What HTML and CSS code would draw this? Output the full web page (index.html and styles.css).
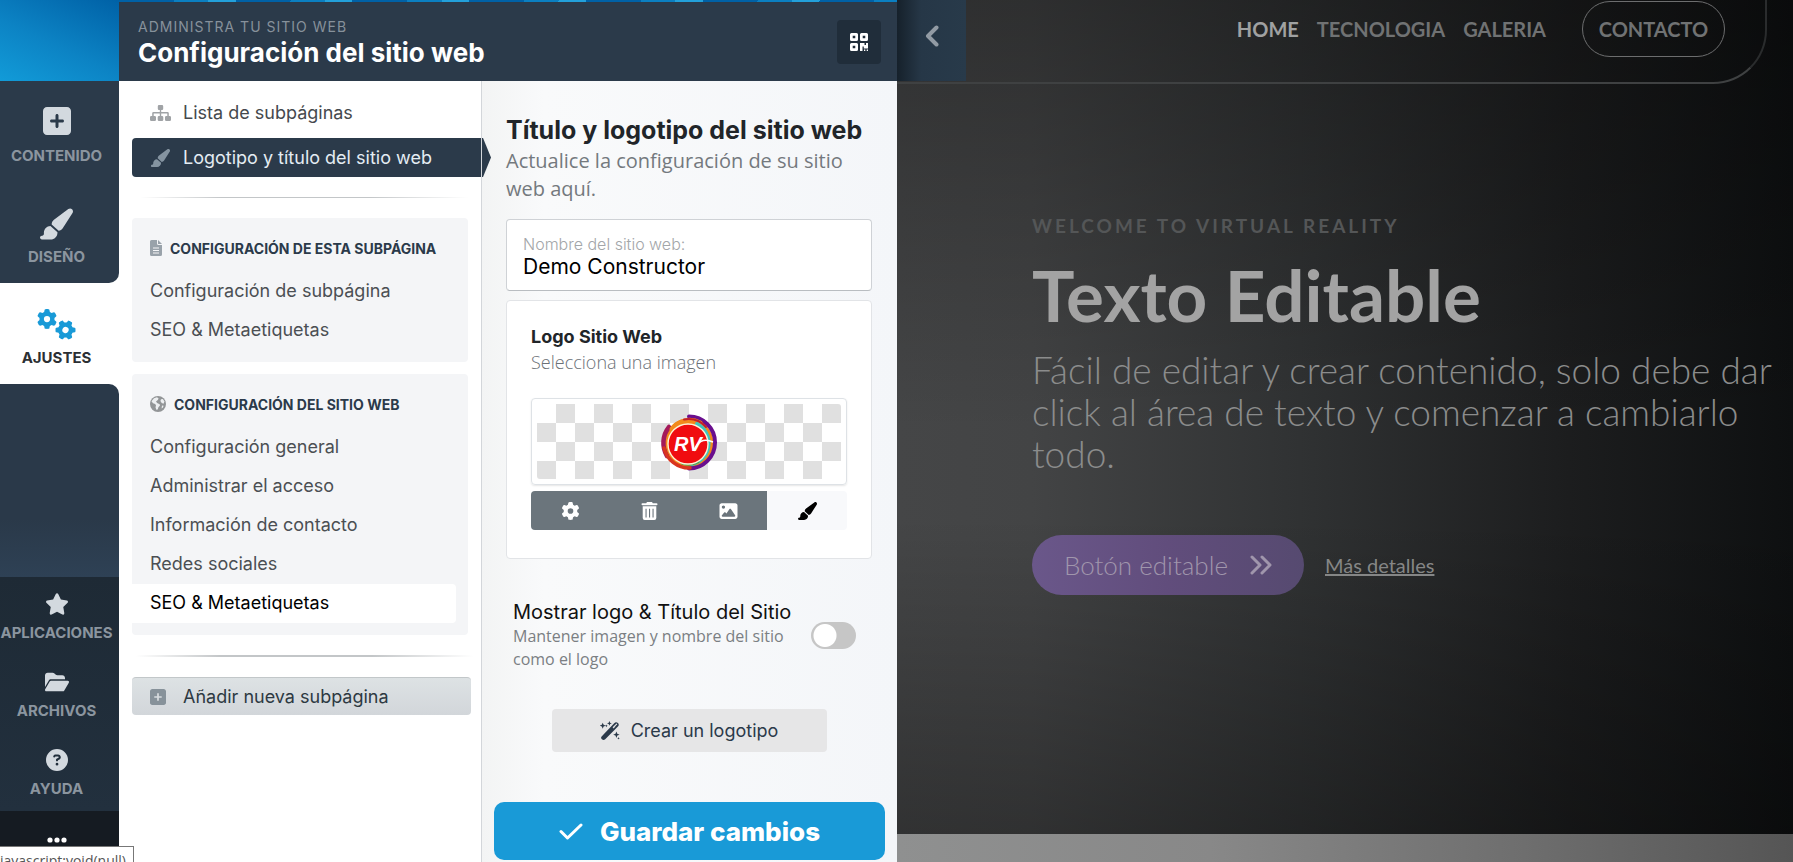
FILE: index.html
```html
<!DOCTYPE html>
<html lang="es">
<head>
<meta charset="utf-8">
<meta name="viewport" content="width=device-width, initial-scale=1">
<title>Configuración del sitio web</title>
<link rel="stylesheet" href="styles.css">
</head>
<body>
<svg class="sprite" aria-hidden="true">
  <symbol id="i-plus" viewBox="0 32 448 448"><path d="M64 32C28.700 32 0 60.700 0 96V416c0 35.300 28.700 64 64 64H384c35.300 0 64-28.700 64-64V96c0-35.300-28.700-64-64-64H64zM200 344V280H136c-13.300 0-24-10.700-24-24s10.700-24 24-24h64V168c0-13.300 10.700-24 24-24s24 10.700 24 24v64h64c13.300 0 24 10.700 24 24s-10.700 24-24 24H248v64c0 13.300-10.700 24-24 24s-24-10.700-24-24z"/></symbol>
  <symbol id="i-brush" viewBox="32 0 544 512"><path d="M339.3 367.1c27.3-3.9 51.9-19.4 67.2-42.9L568.2 74.1c12.6-19.5 9.4-45.3-7.6-61.2S517.7-4.4 499.1 9.6L262.4 187.2c-24 18-38.2 46.1-38.4 76.1L339.3 367.1zm-19.6 25.4l-116-104.4C143.9 290.3 96 339.6 96 400c0 3.9 .2 7.8 .6 11.6C98.4 429.1 86.4 448 68.800 448H64c-17.7 0-32 14.3-32 32s14.3 32 32 32H208c61.900 0 112-50.100 112-112c0-2.500-.1-5-.2-7.500z"/></symbol>
  <symbol id="i-gear" viewBox="0 0 512 512"><path d="M495.9 166.6c3.2 8.7 .5 18.4-6.4 24.6l-43.3 39.4c1.1 8.3 1.7 16.8 1.7 25.4s-.6 17.1-1.7 25.4l43.3 39.4c6.9 6.2 9.6 15.9 6.4 24.6c-4.4 11.9-9.7 23.3-15.8 34.3l-4.7 8.1c-6.6 11-14 21.4-22.1 31.2c-5.9 7.2-15.7 9.6-24.5 6.8l-55.7-17.7c-13.4 10.3-28.2 18.9-44 25.4l-12.5 57.1c-2 9.1-9 16.3-18.2 17.8c-13.8 2.3-28 3.5-42.5 3.5s-28.7-1.2-42.5-3.5c-9.2-1.5-16.2-8.7-18.2-17.8l-12.5-57.1c-15.8-6.5-30.6-15.1-44-25.4L83.1 425.9c-8.8 2.8-18.6 .3-24.5-6.8c-8.1-9.8-15.5-20.2-22.1-31.2l-4.7-8.1c-6.1-11-11.4-22.4-15.8-34.3c-3.2-8.7-.5-18.4 6.4-24.6l43.3-39.4C64.6 273.1 64 264.6 64 256s.6-17.1 1.7-25.4L22.4 191.2c-6.9-6.2-9.6-15.9-6.4-24.6c4.4-11.9 9.7-23.3 15.8-34.3l4.7-8.1c6.6-11 14-21.4 22.1-31.2c5.9-7.2 15.7-9.6 24.5-6.8l55.7 17.7c13.4-10.3 28.2-18.9 44-25.4l12.5-57.1c2-9.1 9-16.3 18.2-17.8C227.3 1.2 241.5 0 256 0s28.7 1.2 42.5 3.5c9.2 1.5 16.2 8.7 18.2 17.8l12.5 57.1c15.8 6.5 30.6 15.1 44 25.4l55.7-17.7c8.8-2.8 18.6-.3 24.5 6.8c8.1 9.8 15.5 20.2 22.1 31.2l4.7 8.1c6.1 11 11.4 22.4 15.8 34.3zM256 336a80 80 0 1 0 0-160 80 80 0 1 0 0 160z"/></symbol>
</svg>

<div class="app">
  <nav class="rail" aria-label="Principal">
    <div class="rail-brand"></div>
    <div class="rail-group rail-top">
      <a class="rail-item" href="#"><svg class="ri-28"><use href="#i-plus"/></svg><span>CONTENIDO</span></a>
      <a class="rail-item" href="#"><svg class="ri-33"><use href="#i-brush"/></svg><span>DISEÑO</span></a>
    </div>
    <a class="rail-item rail-active" href="#"><svg class="ri-gears" viewBox="0 0 39 31"><use href="#i-gear" x="0" y="0" width="20" height="20"/><g transform="rotate(30 28.500 21)"><use href="#i-gear" x="18.500" y="11" width="20" height="20"/></g></svg><span>AJUSTES</span></a>
    <div class="rail-fill"></div>
    <div class="rail-group rail-low">
      <a class="rail-item" href="#"><svg class="ri-23" viewBox="0 0 576 512"><path d="M316.9 18C311.600 7 300.400 0 288.100 0s-23.400 7-28.800 18L195 150.300 51.400 171.500c-12 1.800-22 10.200-25.700 21.700s-.7 24.200 7.900 32.700L137.800 329 113.200 474.700c-2 12 3 24.200 12.900 31.300s23 8 33.800 2.300l128.300-68.500 128.300 68.500c10.800 5.700 23.900 4.900 33.800-2.300s14.900-19.300 12.900-31.300L438.500 329 542.700 225.900c8.600-8.500 11.700-21.200 7.900-32.700s-13.700-19.900-25.700-21.700L381.200 150.300 316.900 18z"/></svg><span>APLICACIONES</span></a>
      <a class="rail-item" href="#"><svg class="ri-23" viewBox="0 0 576 512"><path d="M88.7 223.800L0 375.800V96C0 60.700 28.700 32 64 32H181.500c17 0 33.300 6.700 45.300 18.700l26.500 26.500c12 12 28.300 18.700 45.300 18.700H416c35.300 0 64 28.700 64 64v32H144c-22.800 0-43.800 12.100-55.300 31.800zm27.600 16.100C122.100 230 132.600 224 144 224H544c11.500 0 22 6.100 27.700 16.100s5.700 22.200-.1 32.100l-112 192C453.900 474 443.400 480 432 480H32c-11.500 0-22-6.100-27.700-16.100s-5.700-22.200 .1-32.100l112-192z"/></svg><span>ARCHIVOS</span></a>
      <a class="rail-item" href="#"><svg class="ri-23" viewBox="0 0 512 512"><path d="M256 512A256 256 0 1 0 256 0a256 256 0 1 0 0 512zM169.800 165.300c7.900-22.300 29.100-37.300 52.800-37.300h58.300c34.900 0 63.100 28.300 63.100 63.100c0 22.600-12.100 43.500-31.700 54.800L280 264.400c-.2 13-10.900 23.600-24 23.600c-13.300 0-24-10.700-24-24V250.500c0-8.600 4.600-16.500 12.100-20.800l44.300-25.400c4.700-2.700 7.600-7.700 7.600-13.100c0-8.400-6.800-15.100-15.100-15.100H222.600c-3.400 0-6.400 2.100-7.500 5.300l-.4 1.200c-4.400 12.500-18.200 19-30.600 14.600s-19-18.200-14.600-30.600l.4-1.200zM224 352a32 32 0 1 1 64 0 32 32 0 1 1 -64 0z"/></svg><span>AYUDA</span></a>
    </div>
    <button class="rail-more" type="button" aria-label="Más opciones"><svg viewBox="0 0 20 6"><circle cx="3" cy="3" r="2.600"/><circle cx="10" cy="3" r="2.600"/><circle cx="17" cy="3" r="2.600"/></svg></button>
  </nav>

  <div class="admin">
    <header class="admin-head">
      <div>
        <p class="eyebrow">ADMINISTRA TU SITIO WEB</p>
        <h1>Configuración del sitio web</h1>
      </div>
      <button class="qr" type="button" aria-label="Código QR"><svg viewBox="0 0 18 18"><path fill-rule="evenodd" d="M1.500 0h5A1.500 1.500 0 0 1 8 1.500v5A1.500 1.500 0 0 1 6.500 8h-5A1.500 1.500 0 0 1 0 6.500v-5A1.500 1.500 0 0 1 1.500 0zm1.200 2.700v2.600h2.600V2.700zM11.500 0h5A1.500 1.500 0 0 1 18 1.500v5A1.500 1.500 0 0 1 16.500 8h-5A1.500 1.500 0 0 1 10 6.500v-5A1.500 1.500 0 0 1 11.500 0zm1.200 2.700v2.600h2.600V2.700zM1.500 10h5A1.500 1.500 0 0 1 8 11.500v5A1.500 1.500 0 0 1 6.500 18h-5A1.500 1.500 0 0 1 0 16.500v-5A1.500 1.500 0 0 1 1.500 10zm1.200 2.700v2.600h2.600v-2.600zM10 10h4.500v2h1.500v-2h2v5.500h-4.200v-2h-1.300V18H10zM14 16.500h1.300V18H14zM16.700 16.500H18V18h-1.300z"/></svg></button>
    </header>

    <div class="admin-body">
      <nav class="menu" aria-label="Ajustes">
        <a class="menu-link" href="#"><svg class="mi" viewBox="0 0 21 16"><path d="M7.800 1.200Q7.800 0 9 0h3q1.200 0 1.200 1.200v2.600Q13.200 5 12 5h-.8v1.900h6.300q1.300 0 1.300 1.300V11h.9q1.300 0 1.300 1.300v2.400q0 1.300-1.300 1.300h-3.400Q15 16 15 14.700v-2.400Q15 11 16.300 11h1V8.400h-6.100V11h.8q1.300 0 1.300 1.300v2.400q0 1.300-1.300 1.300H9q-1.300 0-1.300-1.300v-2.400Q7.700 11 9 11h.8V8.400H3.700V11h1Q6 11 6 12.300v2.400Q6 16 4.700 16H1.300Q0 16 0 14.700v-2.400Q0 11 1.300 11h.9V8.200q0-1.300 1.300-1.300h6.300V5H9Q7.800 5 7.800 3.800z"/></svg>Lista de subpáginas</a>
        <a class="menu-link menu-current" href="#"><svg class="mi"><use href="#i-brush"/></svg>Logotipo y título del sitio web</a>
        <hr class="rule">
        <section class="group">
          <h2><svg class="gi-file" viewBox="0 0 12 16"><path fill-rule="evenodd" d="M1.500 0H7v3.500Q7 5 8.500 5H12v9.500q0 1.500-1.500 1.500h-9Q0 16 0 14.500v-13Q0 0 1.500 0zM8 0l4 4H8zM3 7.600v1h6v-1zM3 10v1h6v-1zM3 12.400v1h6v-1z"/></svg>CONFIGURACIÓN DE ESTA SUBPÁGINA</h2>
          <a href="#">Configuración de subpágina</a>
          <a href="#">SEO &amp; Metaetiquetas</a>
        </section>
        <section class="group">
          <h2><svg class="gi-globe" viewBox="0 0 16 16"><circle cx="8" cy="8" r="8"/><path class="land" d="M1.500 5.200L3 7.200l2.200.8.8 1.600-.5 1.600.8 2.600 1.400-.4.700-2.200 1.600-1.600-.3-1.400-2.600-1.200L6 5.600 7.800 4l.8-1.600L7 1.300 4 2.200zM11 3.200l1.800-.3 1.700 2.500-1 2.300-1.800-.6-1.300-2zM12 9.600l1.600.2-.6 1.800-1.400.8z"/></svg>CONFIGURACIÓN DEL SITIO WEB</h2>
          <a href="#">Configuración general</a>
          <a href="#">Administrar el acceso</a>
          <a href="#">Información de contacto</a>
          <a href="#">Redes sociales</a>
          <a class="group-hover" href="#">SEO &amp; Metaetiquetas</a>
        </section>
        <hr class="rule rule-strong">
        <button class="add" type="button"><svg class="ai"><use href="#i-plus"/></svg>Añadir nueva subpágina</button>
      </nav>

      <main class="settings">
        <h2 class="settings-title">Título y logotipo del sitio web</h2>
        <p class="settings-lead">Actualice la configuración de su sitio web aquí.</p>
        <div class="field">
          <label for="site-name">Nombre del sitio web:</label>
          <input id="site-name" type="text" value="Demo Constructor">
        </div>
        <section class="card">
          <h3>Logo Sitio Web</h3>
          <p>Selecciona una imagen</p>
          <div class="thumb"><div class="checker">
            <svg class="logo" viewBox="0 0 58 58" role="img" aria-label="RV">
              <circle cx="29" cy="30" r="24.500" fill="#f28a1c"/>
              <g fill="none" stroke-linecap="round">
                <path d="M29 3.500A26 26 0 0 1 29 55.500" stroke="#6a0f8e" stroke-width="4"/>
                <path d="M9 14A25.500 25.500 0 0 0 7 43" stroke="#a3195b" stroke-width="4.500"/>
                <path d="M4 35A26 26 0 0 0 30 55" stroke="#d9341f" stroke-width="3.500"/>
                <path d="M12 16A22 22 0 0 1 40 10" stroke="#f28a1c" stroke-width="5"/>
                <path d="M24 6.500A24 24 0 0 1 46 14" stroke="#c2212c" stroke-width="2"/>
                <path d="M37 11A21.500 21.500 0 0 1 32 51" stroke="#3cc5c0" stroke-width="4"/>
                <path d="M22 50A21 21 0 0 0 38 49" stroke="#4f9f52" stroke-width="3"/>
              </g>
              <circle cx="28" cy="31" r="20" fill="#f00c10" stroke="#fff3d6" stroke-width="1.400"/>
              <text class="logo-mark" x="14" y="38">RV</text>
              <path d="M34 38Q39 23 53 29" fill="none" stroke="#fff" stroke-width="1.500"/>
            </svg>
          </div></div>
          <div class="tools">
            <button type="button" aria-label="Ajustes"><svg><use href="#i-gear"/></svg></button>
            <button type="button" aria-label="Eliminar"><svg viewBox="0 0 16 18"><path fill-rule="evenodd" d="M5.500 0h5l.8 1.200H15q1 0 1 1T15 3.300H1q-1 0-1-1.100t1-1h3.700zM1.200 4.300h13.600V16q0 2-2 2H3.200q-2 0-2-2zM4 6.700v8.800h1.100V6.700zM7.500 6.700v8.800h1.100V6.700zM11 6.700v8.800h1.100V6.700z"/></svg></button>
            <button type="button" aria-label="Imagen"><svg viewBox="0 0 512 512"><path d="M0 96C0 60.700 28.700 32 64 32H448c35.300 0 64 28.700 64 64V416c0 35.300-28.700 64-64 64H64c-35.300 0-64-28.700-64-64V96zM323.800 202.500c-4.500-6.600-11.900-10.500-19.800-10.500s-15.400 3.900-19.800 10.500l-87 127.600L170.700 297c-4.600-5.700-11.500-9-18.700-9s-14.200 3.300-18.700 9l-64 80c-5.800 7.200-6.900 17.100-2.900 25.400s12.400 13.600 21.600 13.600h96 32H424c8.900 0 17.100-4.900 21.200-12.800s3.600-17.400-1.400-24.700l-120-176zM112 192a48 48 0 1 0 0-96 48 48 0 1 0 0 96z"/></svg></button>
            <button class="tool-on" type="button" aria-label="Diseño"><svg><use href="#i-brush"/></svg></button>
          </div>
        </section>
        <div class="switch-row">
          <label for="show-logo"><span class="switch-title">Mostrar logo &amp; Título del Sitio</span><span class="switch-hint">Mantener imagen y nombre del sitio como el logo</span></label>
          <input id="show-logo" class="switch" type="checkbox" role="switch">
        </div>
        <button class="create" type="button"><svg viewBox="0 0 20 19"><path d="M1.600 15.400L14.200 2.200Q16 .3 17.900 1.900q1.700 1.700 0 3.500L5.200 18.300Q3.500 19.600 1.900 18.200.4 16.900 1.600 15.400zM16 4.600l.9-.9q.5-.5.1-.9-.5-.4-1 .1L12.600 6.300l1.100 1.100z" fill-rule="evenodd"/><path d="M2.700 1.700l.9 2.100 2.100.9-2.100.9-.9 2.100-.9-2.100-2.100-.9 2.100-.9zM9.400 0l.7 1.700 1.700.7-1.700.7-.7 1.700-.7-1.700L7 2.400l1.700-.7zM6.300 3.500l.5.900.9.400-.9.500-.5.900-.4-.9-.9-.5.900-.4zM16.400 10.500l.9 2.300 2.300.9-2.300.9-.9 2.300-.9-2.300-2.300-.9 2.300-.9zM18.500 16l.4.900.9.400-.9.400-.4.900-.4-.9-.9-.4.900-.4z"/></svg>Crear un logotipo</button>
        <button class="save" type="submit"><svg viewBox="0 0 24 17"><path d="M2 8.500l6.500 6.500L22 2"/></svg>Guardar cambios</button>
      </main>
    </div>
  </div>

  <div class="preview">
    <button class="collapse" type="button" aria-label="Contraer"><svg viewBox="0 0 14 22"><path d="M11.500 2.500L3 11l8.500 8.500"/></svg></button>
    <header class="site-head">
      <nav>
        <a class="on" href="#">HOME</a>
        <a href="#">TECNOLOGIA</a>
        <a href="#">GALERIA</a>
        <a class="pill" href="#">CONTACTO</a>
      </nav>
    </header>
    <section class="hero">
      <p class="hero-eyebrow">WELCOME TO VIRTUAL REALITY</p>
      <h2>Texto Editable</h2>
      <p class="hero-text">Fácil de editar y crear contenido, solo debe dar click al área de texto y comenzar a cambiarlo todo.</p>
      <div class="hero-actions">
        <a class="hero-btn" href="#">Botón editable<svg viewBox="0 0 22 20"><path d="M2 2l8 8-8 8M12 2l8 8-8 8"/></svg></a>
        <a class="hero-more" href="#">Más detalles</a>
      </div>
    </section>
    <div class="next-strip"></div>
  </div>
</div>
<div class="status">javascript:void(null)</div>
</body>
</html>
```
FILE: styles.css
```css
* { box-sizing: border-box; }
body {
  margin: 0;
  font-family: Inter, "Liberation Sans", sans-serif;
  color: #212529;
  overflow: hidden;
}
h1, h2, h3, p { margin: 0; }
a { color: inherit; text-decoration: none; }
button { border: 0; padding: 0; font: inherit; color: inherit; }
svg { display: block; fill: currentColor; flex: none; }
.sprite { position: absolute; width: 0; height: 0; }

.app { display: flex; height: 100vh; }

/* Left rail */
.rail {
  flex: 0 0 119px;
  display: flex;
  flex-direction: column;
  background: #fff;
  font-weight: 700;
  font-size: 15px;
  line-height: 20px;
}
.rail-brand { height: 81px; flex: none; background: linear-gradient(25deg, #129bd8 0%, #0c83c4 45%, #0061a6 100%); }
.rail-group { background: #2b3a4a; }
.rail-top { border-bottom-right-radius: 10px; flex: none; }
.rail-item {
  display: flex;
  flex-direction: column;
  align-items: center;
  justify-content: space-between;
  height: 101px;
  padding: 26px 0 16px;
  margin-right: 6px;
  color: #d3d9df;
}
.rail-item span { color: #8b959f; }
.ri-28 { width: 28px; height: 28px; }
.ri-33 { width: 33px; height: 32px; }
.ri-23 { width: 24px; height: 22px; }
.ri-gears { width: 39px; height: 31px; }
.rail-active { flex: none; color: #199ad7; }
.rail-active span { color: #2b2f33; }
.rail-fill { flex: 1; background: linear-gradient(#2a3949 70%, #2e4155); border-top-right-radius: 10px; }
.rail-low { background: linear-gradient(#1e2a35, #22303e); flex: none; }
.rail-low .rail-item { height: 78px; padding: 16px 0 12px; white-space: nowrap; }
.rail-more { flex: 0 0 51px; background: #151b22; color: #fff; padding: 7px 6px 0 0; display: flex; justify-content: center; }
.rail-more svg { width: 20px; height: 6px; margin-top: 19px; }

/* Admin panel */
.admin { flex: 0 0 778px; display: flex; flex-direction: column; min-width: 0; }
.admin-head {
  flex: 0 0 81px;
  display: flex;
  justify-content: space-between;
  align-items: center;
  padding: 2px 16px 0 19px;
  color: #fff;
  background:
    repeating-linear-gradient(100deg, #0061a6 0 54px, #0b7fc1 54px 88px, #23a0da 88px 115px) top / 100% 2px no-repeat,
    #2b3a4a;
}
.eyebrow { font-size: 14px; line-height: 22px; letter-spacing: 1px; color: #87919b; }
h1 { font-size: 26px; line-height: 30px; font-weight: 700; }
.qr { width: 44px; height: 44px; border-radius: 4px; background: #202d3a; display: grid; place-items: center; }
.qr svg { width: 18px; height: 18px; }
.admin-body { flex: 1; display: flex; min-height: 0; }

/* Settings menu */
.menu { flex: 0 0 363px; padding: 12px 0 0 13px; border-right: 1px solid #d3d6da; background: #fff; font-size: 18px; }
.menu-link {
  position: relative;
  display: flex;
  align-items: center;
  gap: 12px;
  height: 39px;
  padding-left: 18px;
  margin-bottom: 6px;
  color: #45494d;
}
.mi { width: 21px; height: 18px; color: #a0a3a6; }
.menu-current { background: #2b3a4a; color: #e4ecf3; border-radius: 4px 0 0 4px; }
.menu-current .mi { color: #8594a1; }
.menu-current::after {
  content: "";
  position: absolute;
  left: 100%;
  top: 0;
  width: 9px;
  height: 39px;
  background: #2b3a4a;
  border-left: 1px solid #d3d6da;
  clip-path: polygon(0 0, 2px 0, 100% 50%, 2px 100%, 0 100%);
}
.rule { height: 1px; border: 0; margin: 20px 13px 20px 8px; background: linear-gradient(90deg, transparent, #c3c6c8 25%, #c3c6c8 70%, transparent); }
.rule-strong { height: 2px; margin: 20px 8px 20px 4px; }
.group { margin: 0 13px 12px 0; padding: 15px 0 12px; background: #f4f5f7; border-radius: 4px; color: #4b4f53; }
.group h2 {
  display: flex;
  align-items: center;
  gap: 8px;
  padding-left: 18px;
  height: 30px;
  margin-bottom: 9px;
  font-size: 14px;
  font-weight: 700;
  color: #2b3a4a;
  white-space: nowrap;
}
.gi-file { width: 12px; height: 16px; color: #99a2aa; }
.gi-globe { width: 16px; height: 16px; color: #929597; }
.land { fill: #eceef0; }
.group a { display: block; padding-left: 18px; height: 39px; line-height: 38px; }
.group .group-hover { margin-right: 12px; background: #fff; color: #000; border-radius: 0 4px 4px 0; }
.add {
  display: flex;
  align-items: center;
  gap: 17px;
  width: 339px;
  height: 38px;
  padding-left: 18px;
  border-radius: 4px;
  background: linear-gradient(#dde2e4, #d2d6da);
  border-top: 1px solid #c2c7c9;
  color: #2d3942;
}
.ai { width: 16px; height: 16px; color: #87929a; }

/* Settings form */
.settings {
  flex: 1;
  min-width: 0;
  display: flex;
  flex-direction: column;
  padding: 32px 12px 2px 12px;
  background: linear-gradient(90deg, #f3f4f4, #f9fafb 15%, #f4f6f9);
}
.settings > * { margin-left: 12px; margin-right: 13px; }
.settings-title { font-size: 25px; line-height: 34px; font-weight: 700; white-space: nowrap; }
.settings-lead { font-family: "Open Sans", sans-serif; font-size: 20px; line-height: 28px; color: #74797e; }
.field {
  margin-top: 16px;
  height: 72px;
  padding: 14px 16px 0;
  background: #fff;
  border: 1px solid #cfd2d6;
  border-bottom-color: #b9bdc1;
  border-radius: 4px;
  display: flex;
  flex-direction: column;
}
.field label { font-size: 16px; line-height: 21px; color: #a3a6a9; font-weight: 300; }
.field input { border: 0; outline: 0; padding: 0; font: inherit; font-size: 21px; line-height: 24px; height: 24px; color: #000; background: none; }
.card { margin-top: 9px; padding: 23px 24px 28px; background: #fff; border: 1px solid #e2e4e7; border-radius: 4px; }
.card h3 { font-size: 18px; line-height: 26px; font-weight: 700; }
.card p { font-family: "Open Sans", sans-serif; font-size: 18px; line-height: 24px; font-weight: 300; color: #6b7177; }
.thumb { margin-top: 24px; height: 87px; padding: 5px; border: 1px solid #dee2e6; border-radius: 4px; box-shadow: 0 1px 2px #0000001a; }
.checker {
  height: 75px;
  display: grid;
  place-items: center;
  border-radius: 3px;
  background: repeating-conic-gradient(#e0e0e0 0 25%, #fff 0 50%) 0 0 / 38px 38px;
}
.logo { width: 58px; height: 58px; }
.logo-mark { font: italic 700 20px "Liberation Sans", sans-serif; fill: #fff; }
.tools { display: grid; grid-template-columns: 79px 79px 78px 1fr; height: 39px; margin-top: 6px; border-radius: 4px; overflow: hidden; }
.tools button { background: #6b757c; color: #fff; display: grid; place-items: center; }
.tools .tool-on { background: #f8f9fb; color: #000; }
.tools svg { width: 19px; height: 18px; }
.switch-row { margin: 41px 29px 0 19px; display: flex; align-items: center; gap: 16px; }
.switch-row label { flex: 1; min-width: 0; }
.switch-title { display: block; font-size: 20px; line-height: 25px; color: #111; white-space: nowrap; }
.switch-hint { display: block; font-family: "Open Sans", sans-serif; font-size: 16px; line-height: 23px; color: #7b7f83; }
.switch { appearance: none; flex: none; margin: 0; width: 45px; height: 27px; border-radius: 14px; background: radial-gradient(circle at 14px 50%, #fff 11px, transparent 12px), #c6c6c6; }
.create {
  align-self: center;
  margin-top: 38px;
  width: 275px;
  height: 43px;
  display: flex;
  justify-content: center;
  align-items: center;
  gap: 11px;
  border-radius: 4px;
  background: #e6e6e7;
  color: #2b3a4a;
  font-size: 18px;
}
.create svg { width: 20px; height: 19px; }
.settings .save {
  margin: auto 0 0;
  height: 58px;
  flex: none;
  display: flex;
  justify-content: center;
  align-items: center;
  gap: 17px;
  border-radius: 10px;
  background: #199ad7;
  color: #fff;
  font-size: 26px;
  font-weight: 800;
}
.save svg { width: 24px; height: 17px; fill: none; stroke: #fff; stroke-width: 3; stroke-linecap: round; stroke-linejoin: round; }

/* Site preview, dimmed */
.preview {
  position: relative;
  flex: 1;
  min-width: 0;
  display: flex;
  flex-direction: column;
  overflow: hidden;
  font-family: Lato, sans-serif;
  background:
    linear-gradient(#00000050, transparent 50%, transparent 60%, #00000050),
    linear-gradient(90deg, #454647, #434445 15%, #303233 45%, #1c1d1e 75%, #0e1011);
}
.collapse {
  position: absolute;
  left: 0;
  top: 0;
  width: 69px;
  height: 81px;
  display: grid;
  place-items: center;
  padding-bottom: 10px;
  background: linear-gradient(90deg, #16212b, #263747 35%, #283a4a);
  color: #929ba4;
}
.collapse svg { width: 14px; height: 22px; fill: none; stroke: currentColor; stroke-width: 4; stroke-linecap: round; stroke-linejoin: round; }
.site-head {
  flex: 0 0 84px;
  margin-right: 26px;
  padding: 1px 40px 0 0;
  border: 2px solid #3f4142;
  border-width: 0 2px 2px 0;
  border-right-color: #2a2c2d;
  border-radius: 0 0 54px 0;
}
.site-head nav { display: flex; justify-content: flex-end; align-items: center; gap: 18px; font-size: 20px; font-weight: 700; color: #707273; }
.site-head .on { color: #a0a1a1; }
.site-head .pill { display: grid; place-items: center; width: 143px; height: 56px; margin-left: 18px; border: 1px solid #6c6d6e; border-radius: 28px; }
.hero { flex: 1; padding: 130px 0 0 135px; color: #8b8c8c; }
.hero-eyebrow { font-size: 19px; line-height: 24px; font-weight: 700; letter-spacing: 3px; color: #545657; }
.hero h2 { margin-top: 12px; font-size: 71px; line-height: 90px; font-weight: 700; color: #a3a3a3; }
.hero-text { max-width: 754px; margin-top: 9px; font-size: 37px; line-height: 42px; font-weight: 300; }
.hero-actions { display: flex; align-items: center; gap: 21px; margin-top: 60px; }
.hero-btn {
  display: flex;
  align-items: center;
  justify-content: center;
  gap: 22px;
  width: 272px;
  height: 60px;
  border-radius: 30px;
  background: linear-gradient(90deg, #6a578a, #614d7c 50%, #564a70);
  color: #a096ac;
  font-size: 26px;
  font-weight: 300;
}
.hero-btn svg { width: 22px; height: 20px; fill: none; stroke: currentColor; stroke-width: 3; stroke-linecap: round; stroke-linejoin: round; }
.hero-more { font-size: 20px; text-decoration: underline; color: #858686; }
.next-strip { flex: 0 0 28px; background: linear-gradient(90deg, #8f9090, #888 35%, #6e6e6e 70%, #555); }

/* Browser link hint */
.status {
  position: fixed;
  left: -1px;
  bottom: -8px;
  width: 135px;
  height: 24px;
  padding-top: 4px;
  border: 1px solid #777;
  background: #fff;
  font: 14px/20px "Open Sans", sans-serif;
  color: #555;
  white-space: nowrap;
}
```
